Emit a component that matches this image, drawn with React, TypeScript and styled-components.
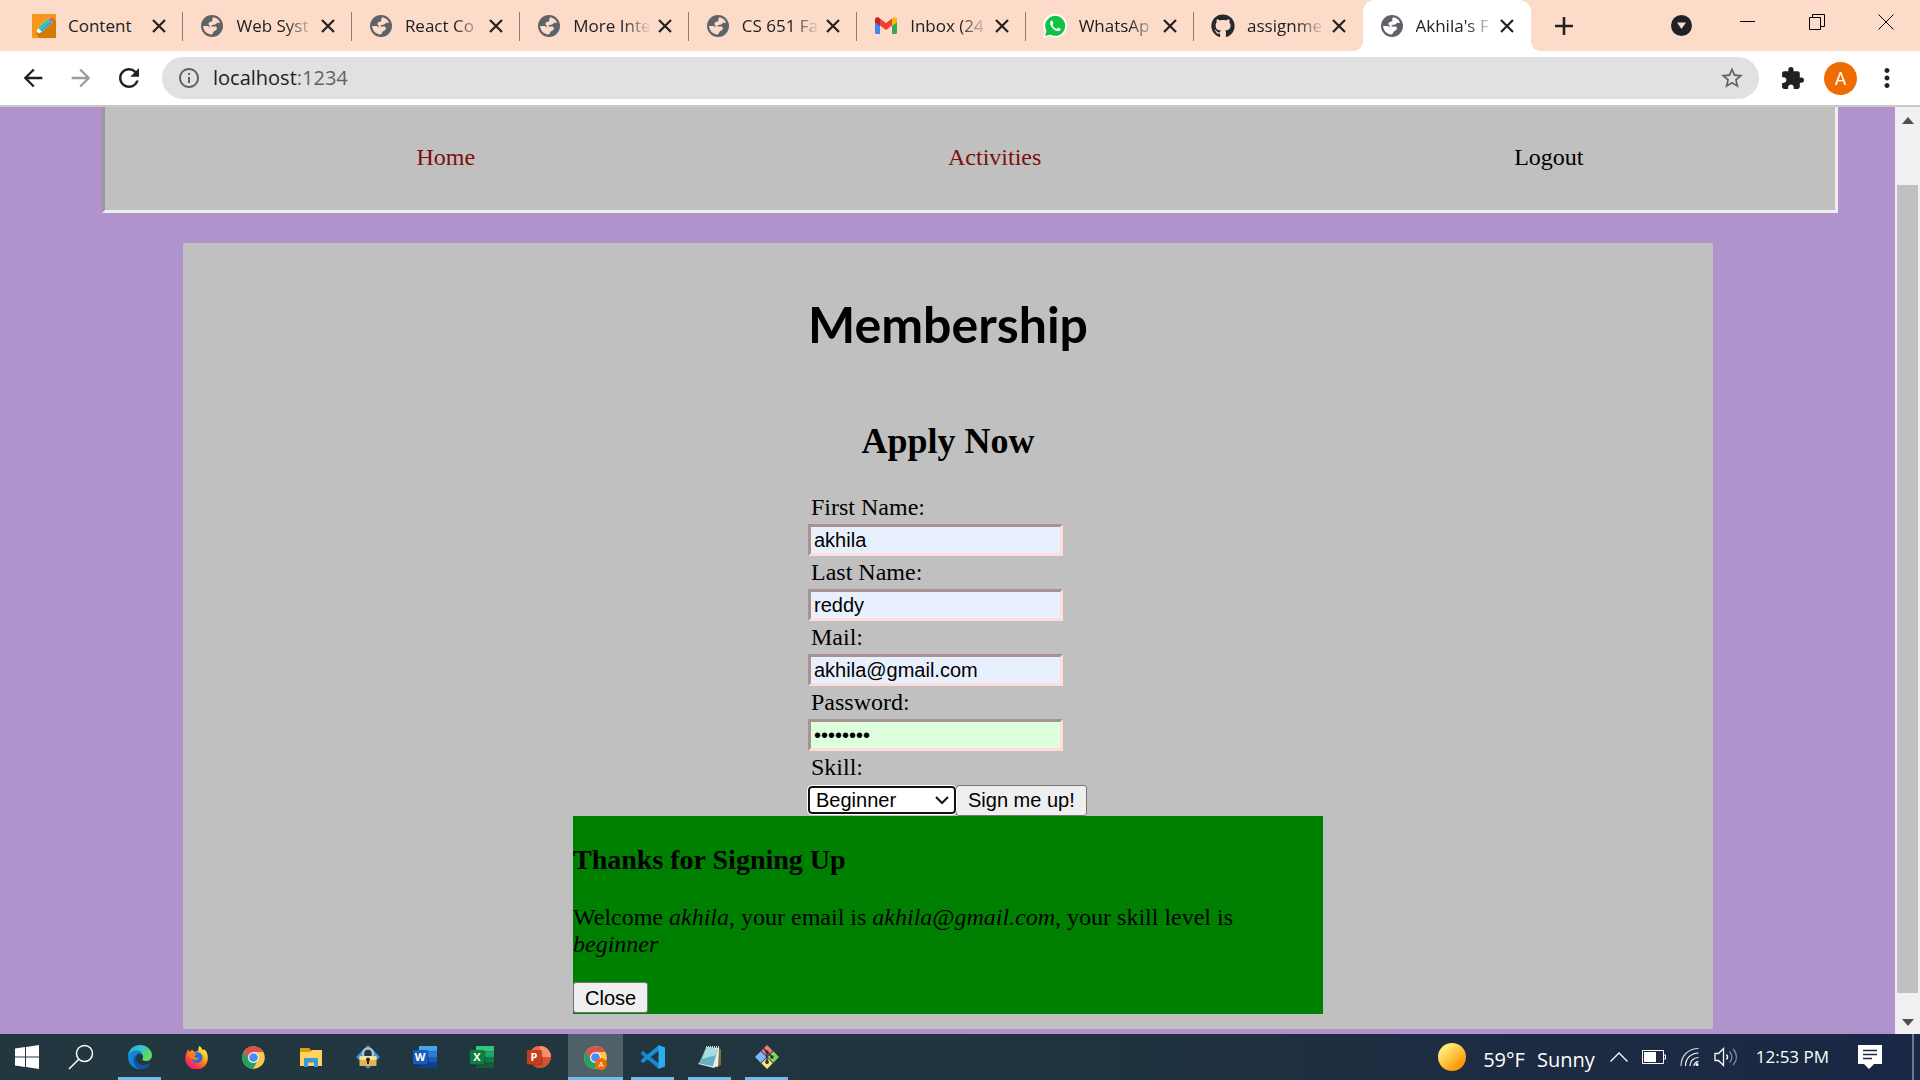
import React, { useState } from "react";
import styled, { createGlobalStyle, css } from "styled-components";
import {
  MdArrowBack,
  MdArrowForward,
  MdExtension,
  MdInfoOutline,
  MdMoreVert,
  MdRefresh,
  MdStarBorder,
} from "react-icons/md";
import { FaGithub } from "react-icons/fa";

const ui = `"Segoe UI", "Open Sans", "Noto Sans", sans-serif`;
const serif = `"Times New Roman", "Liberation Serif", serif`;
const arial = `Arial, "Liberation Sans", sans-serif`;

const GlobalStyle = createGlobalStyle`
  *, *::before, *::after { box-sizing: border-box; }
  body { margin: 0; background: #b092cc; }
  button { font: inherit; color: inherit; cursor: pointer; }
  svg { display: block; flex: none; }
`;

const Screen = styled.div`
  display: flex;
  flex-direction: column;
  height: 100vh;
  overflow: hidden;
`;

/* ---------- browser chrome ---------- */

const TabStrip = styled.header`
  display: flex;
  flex: none;
  height: 51px;
  padding-left: 15px;
  background: #fddbc9;
  font-family: ${ui};
  font-size: 17px;
  color: #202124;
`;

const Tabs = styled.div`
  display: flex;
  flex: 0 1 1516px;
  min-width: 0;
`;

const Tab = styled.div<{ $active?: boolean; $divider?: boolean }>`
  position: relative;
  display: flex;
  flex: 1 1 0;
  min-width: 0;
  align-items: center;
  padding: 0 16px 0 17px;
  ${(p) =>
    p.$divider &&
    css`
      &::after {
        content: "";
        position: absolute;
        right: 0;
        top: 12px;
        width: 1px;
        height: 29px;
        background: #8f7c72;
      }
    `}
  ${(p) =>
    p.$active &&
    css`
      background: #fff;
      border-radius: 12px 12px 0 0;
      &::before,
      &::after {
        content: "";
        position: absolute;
        bottom: 0;
        width: 10px;
        height: 10px;
      }
      &::before {
        right: 100%;
        background: radial-gradient(circle at 0 0, transparent 10px, #fff 10px);
      }
      &::after {
        left: 100%;
        background: radial-gradient(circle at 100% 0, transparent 10px, #fff 10px);
      }
    `}
`;

const TabTitle = styled.span`
  flex: 1;
  min-width: 0;
  margin: 0 6px 0 12px;
  overflow: hidden;
  white-space: nowrap;
  line-height: 24px;
  mask-image: linear-gradient(to right, #000 50px, transparent 78px);
`;

const PlainTitle = styled(TabTitle)`
  mask-image: none;
`;

const IconButton = styled.button<{ $width: number; $dim?: boolean }>`
  display: flex;
  flex: none;
  align-items: center;
  justify-content: center;
  width: ${(p) => p.$width}px;
  padding: 0;
  border: 0;
  background: none;
  color: ${(p) => (p.$dim ? "#9b9c9e" : "#202124")};
`;

const WindowButtons = styled.div`
  display: flex;
  margin-left: auto;
  height: 43px;
`;

const TabSearch = styled(IconButton)`
  height: 51px;
`;

const Toolbar = styled.div`
  display: flex;
  flex: none;
  align-items: center;
  height: 56px;
  padding: 0 12px 0 9px;
  border-bottom: 2px solid #c8c8c8;
  background: #fff;
  font-family: ${ui};
`;

const AddressBar = styled.div`
  display: flex;
  flex: 1;
  align-items: center;
  height: 42px;
  margin: 0 12px 0 9px;
  padding: 0 14px 0 15px;
  border-radius: 21px;
  background: #e1e1e1;
  color: #5f6368;
`;

const Address = styled.a`
  flex: 1;
  margin-left: 12px;
  font-size: 20px;
  line-height: 26px;
  color: #5f6368;
  text-decoration: none;
  b {
    font-weight: 400;
    color: #202124;
  }
`;

const Avatar = styled.button`
  flex: none;
  width: 33px;
  height: 33px;
  margin: 0 9px 0 10px;
  padding: 0;
  border: 0;
  border-radius: 50%;
  background: #ef6c00;
  color: #fff;
  font-family: Roboto, sans-serif;
  font-size: 18px;
`;

/* ---------- page ---------- */

const Viewport = styled.div`
  display: flex;
  flex: 1;
  min-height: 0;
  background: #b092cc;
`;

const Page = styled.div`
  flex: 1;
  min-width: 0;
  overflow: hidden;
  font-family: ${serif};
  font-size: 24px;
  line-height: 27px;
  color: #000;
`;

const Nav = styled.nav`
  display: flex;
  justify-content: space-around;
  margin: 0 57px 0 102px;
  padding: 37px 15px 39px 75px;
  border: 3px solid #eee;
  border-top: 0;
  border-left-color: #9a9a9a;
  background: #c0c0c0;
`;

const NavLink = styled.a<{ $plain?: boolean }>`
  color: ${(p) => (p.$plain ? "#000" : "#7b0f0f")};
  text-decoration: none;
`;

const Main = styled.main`
  display: flex;
  flex-direction: column;
  align-items: center;
  margin: 30px 182px 0 183px;
  padding: 48px 0 15px;
  background: #c0c0c0;
`;

const Title = styled.h1`
  margin: 0 0 63px;
  font-family: "Comic Sans MS", Lato, sans-serif;
  font-size: 50px;
  font-weight: 700;
  line-height: 67px;
`;

const Subtitle = styled.h2`
  margin: 0 0 29px;
  font-size: 36px;
  line-height: 41px;
`;

const Form = styled.form`
  display: flex;
  flex-direction: column;
  align-items: flex-start;
  width: 280px;
`;

const Label = styled.label`
  padding-left: 3px;
  line-height: 33px;
`;

const Field = styled.input<{ $fresh?: boolean }>`
  width: 255px;
  height: 32px;
  padding: 1px 3px;
  border: 3px solid;
  border-color: #a89292 #ffdddd #ffdddd #a89292;
  border-radius: 0;
  outline: 0;
  background: ${(p) => (p.$fresh ? "#ddffdd" : "#e8f0fe")};
  color: #000;
  font-family: ${arial};
  font-size: 20px;
`;

const Controls = styled.div`
  display: flex;
  align-items: center;
  height: 32px;
`;

const SelectBox = styled.div`
  position: relative;
  svg {
    position: absolute;
    right: 7px;
    top: 10px;
    pointer-events: none;
  }
`;

const Select = styled.select`
  display: block;
  width: 148px;
  height: 28px;
  padding: 0 6px;
  appearance: none;
  border: 2px solid #101010;
  border-radius: 4px;
  outline: 1px solid #fff;
  background: #fff;
  color: #000;
  font-family: ${arial};
  font-size: 20px;
  line-height: 24px;
`;

const Button = styled.button`
  height: 31px;
  padding: 0 11px;
  border: 1px solid #767676;
  border-radius: 3px;
  background: #efefef;
  color: #000;
  font-family: ${arial};
  font-size: 20px;
  line-height: 24px;
  white-space: nowrap;
`;

const Notice = styled.section`
  width: 750px;
  max-width: 100%;
  padding: 28px 0 1px;
  background: #008000;
  h3 {
    margin: 0 0 28px;
    font-size: 28px;
    line-height: 32px;
  }
  p {
    margin: 0 0 24px;
  }
  button {
    display: block;
  }
`;

const Scrollbar = styled.div`
  display: flex;
  flex: none;
  flex-direction: column;
  align-items: center;
  width: 25px;
  padding: 10px 0 8px;
  background: #f0f0f0;
`;

const Thumb = styled.div`
  flex: 1;
  width: 21px;
  margin: 61px 0 26px;
  background: #c0c0c0;
`;

/* ---------- taskbar ---------- */

const Taskbar = styled.footer`
  display: flex;
  flex: none;
  height: 46px;
  background: linear-gradient(to right, #22373f, #20353f 50%, #1d2b42 80%, #1a2745);
  color: #fff;
  font-family: ${ui};
`;

const Apps = styled.div`
  display: flex;
  gap: 2px;
  margin-left: 4px;
`;

const TaskButton = styled.button<{ $running?: boolean; $current?: boolean }>`
  position: relative;
  display: flex;
  flex: none;
  align-items: center;
  justify-content: center;
  width: 55px;
  padding: 0;
  border: 0;
  background: ${(p) => (p.$current ? "#4e6168" : "transparent")};
  ${(p) =>
    p.$running &&
    css`
      &::after {
        content: "";
        position: absolute;
        bottom: 0;
        left: ${p.$current ? 0 : 6}px;
        right: ${p.$current ? 0 : 6}px;
        height: 3px;
        background: #76b9ed;
      }
    `}
`;

const SystemButton = styled(TaskButton)`
  width: 54px;
`;

const Tray = styled.div`
  display: flex;
  align-items: center;
  margin-left: auto;
`;

const Weather = styled.div`
  display: flex;
  align-items: center;
  gap: 12px;
  margin: 0 15px 0 17px;
  padding-top: 5px;
  font-size: 20px;
  line-height: 26px;
`;

const TrayIcons = styled.div`
  display: flex;
  align-items: center;
  gap: 14px;
`;

const Clock = styled.time`
  margin: 0 29px 0 18px;
  font-size: 17px;
  line-height: 24px;
`;

const PeekEdge = styled.div`
  align-self: stretch;
  width: 8px;
  margin-left: 30px;
  border-left: 2px solid #6f788b;
`;

/* ---------- drawings ---------- */

const Globe = ({ land = "#fddbc9" }: { land?: string }) => (
  <svg width="24" height="24" viewBox="0 0 24 24">
    <circle cx="12" cy="12" r="11" fill="#5f6368" />
    <path
      d="M13.500 3.300c3 .6 5.400 2.600 6.600 5.300-1 .5-2.300.3-3-.2-.8 1.800-2.300 2.400-3.900 2.400-1.300 0-1.900.7-1.700 1.700h3.800c1.600 0 2.100 2.400.9 3.600-.8.8-2.600.9-2.900 2.100-.2.900-1 2.300-2 2.400C6.500 20 3.300 16.400 3.100 12h4.200c1.400 0 2.300.9 2.500 1.900.1-1.100.1-2.400-.9-3.100-.9-.7-.4-2.600.9-2.900 1.200-.3 2.500 0 2.600-1.300.1-1.200-.6-2.600 1.100-3.300z"
      fill={land}
    />
  </svg>
);

const Cross = () => (
  <svg width="14" height="14" viewBox="0 0 14 14" stroke="#202124" strokeWidth="2.200">
    <path d="M1 1l12 12M13 1L1 13" />
  </svg>
);

const Plus = () => (
  <svg width="18" height="18" viewBox="0 0 18 18" stroke="#202124" strokeWidth="2.600">
    <path d="M9 0v18M0 9h18" />
  </svg>
);

const Pencil = () => (
  <svg width="24" height="24" viewBox="0 0 24 24">
    <rect width="24" height="24" fill="#f7981d" />
    <path d="M20 3l4 4v17H7l-3-4z" fill="#d17c00" />
    <path d="M4 20l2-6L17 4l4 4L10 18z" fill="#fff" />
    <path d="M6 14L16 5l2 2L8 16z" fill="#20c9b6" />
    <path d="M8 16L18 7l2 2-10 9z" fill="#3aa6c0" />
    <path d="M16 5l2-1 3 3-1 2z" fill="#b65fc0" />
    <path d="M4 20l1-2 1 1z" fill="#333" />
  </svg>
);

const Gmail = () => (
  <svg width="24" height="17" viewBox="-1 0 24 17">
    <path d="M0 3v12.500a1.500 1.500 0 0 0 1.500 1.500H5V7z" fill="#4285f4" />
    <path d="M22 3v12.500a1.500 1.500 0 0 1-1.500 1.500H17V7z" fill="#34a853" />
    <path d="M5 1.500v7l6 4.500 6-4.500v-7L11 6z" fill="#ea4335" />
    <path d="M0 3v2.200L5 9V1.500C2.500-.5 0 0 0 3z" fill="#c5221f" />
    <path d="M22 3v2.200L17 9V1.500C19.500-.5 22 0 22 3z" fill="#fbbc04" />
  </svg>
);

const WhatsApp = () => (
  <svg width="24" height="24" viewBox="0 0 24 24">
    <path d="M0 24l1.700-6.200A12 12 0 1 1 6.300 22.300z" fill="#fff" />
    <path d="M2 22l1.500-5.200A10 10 0 1 1 7.200 20.500z" fill="#12c143" />
    <path
      d="M8.500 6.500c-1.600.8-1.800 2.600-1 4.400 1.300 2.900 3.700 5.200 6.600 6.200 1.700.5 3.300-.2 3.700-2l-2.700-1.500-1.400 1.400c-2-.8-3.500-2.200-4.300-4l1-1.300L9.300 6.500z"
      fill="#fff"
    />
  </svg>
);

const Arrow = ({ down }: { down?: boolean }) => (
  <svg width="12" height="7" viewBox="0 0 12 7">
    <path d={down ? "M0 0h12L6 7z" : "M0 7h12L6 0z"} fill="#505050" />
  </svg>
);

const Windows = () => (
  <svg width="24" height="24" viewBox="0 0 24 24" fill="#fff">
    <path d="M0 3.400l10-1.400v9.500H0zM11 1.900L24 0v11.500H11zM0 12.500h10V22L0 20.600zM11 12.500h13V24l-13-1.900z" />
  </svg>
);

const Search = () => (
  <svg width="26" height="26" viewBox="0 0 26 26" fill="none" stroke="#fff" strokeWidth="1.500">
    <circle cx="16.500" cy="9.500" r="8" />
    <path d="M10.800 15.200L1 25" />
  </svg>
);

const Edge = () => (
  <svg width="24" height="24" viewBox="0 0 24 24">
    <defs>
      <linearGradient id="edgeTop" x1="0" y1="0" x2="1" y2="0.500">
        <stop offset="0" stopColor="#2aa9e8" />
        <stop offset="0.500" stopColor="#2fc3cf" />
        <stop offset="1" stopColor="#66dd4e" />
      </linearGradient>
    </defs>
    <path d="M0 12C0 5 5 0 12 0s12 5 12 10c0 4-3 6-6 6-3 0-4-1-3.500-2 1.500-2.500 0-6-4.500-6C5 8 1 11 0 12z" fill="url(#edgeTop)" />
    <path d="M0 12c.5-4 4-6.500 8.500-6.500 4 0 6.700 2.500 6.700 5.300 0-1.800-1.600-2.800-3.600-2.800C9 8.500 8 11 8 13.500c0 4 2.500 8 7.500 10C8 26 0 20.500 0 12z" fill="#1583d8" />
    <path d="M9.500 9C8 11 7.600 14 9 16.500c2 3.500 7 4.500 11 2.500 1.500-.7 2.500-.5 1.800.7-2 3-6 4.800-10.300 4.200C7 22 5 18.500 5.500 14.500 6 11.500 7.700 9.800 9.500 9z" fill="#0f559f" />
  </svg>
);

const Firefox = () => (
  <svg width="23" height="23" viewBox="0 0 23 23">
    <defs>
      <linearGradient id="fox" x1="0.900" y1="0" x2="0.200" y2="1">
        <stop offset="0.100" stopColor="#fff44f" />
        <stop offset="0.450" stopColor="#ff980e" />
        <stop offset="0.750" stopColor="#ff3647" />
        <stop offset="1" stopColor="#e31587" />
      </linearGradient>
    </defs>
    <path d="M1.500 7L3 3.500 5 6l2-2.500L9 6l4-1 1-5c2 1 3 2.500 3.500 4l2-.5C22 6 23 9 22.800 12.500A11.300 11.300 0 1 1 1.500 7z" fill="url(#fox)" />
    <circle cx="12" cy="11.500" r="5.500" fill="#1f6fe5" />
    <path d="M4 7c2-1 4-1 5 .3l2.500.2c.3 1.200-2 1.600-2 2.700.4 1.800 2.500 2 4.500 1.300-.6 2.500-4 3.600-6 2C5.500 12.500 4 10 4 7z" fill="#ff7a1a" />
  </svg>
);

const Chrome = ({ badge }: { badge?: boolean }) => (
  <svg width="23" height="23" viewBox="0 0 23 23" overflow="visible">
    <circle cx="11.500" cy="11.500" r="11.300" fill="#fcc84c" />
    <path d="M1.700 5.800A11.300 11.300 0 0 1 21.300 6H11.500l-5 8.500z" fill="#d9534a" />
    <path d="M1.700 5.800A11.300 11.300 0 0 0 11 22.800l5-8.500-9 .5z" fill="#1da261" />
    <circle cx="11.500" cy="11.500" r="5.500" fill="#e9eef6" />
    <circle cx="11.500" cy="11.500" r="4.300" fill="#4c8bf5" />
    {badge && (
      <>
        <circle cx="17" cy="18" r="6" fill="#ef6c00" />
        <text x="17" y="21" textAnchor="middle" fontFamily="Roboto, sans-serif" fontSize="8" fill="#fff">
          A
        </text>
      </>
    )}
  </svg>
);

const Explorer = () => (
  <svg width="22" height="19" viewBox="0 0 22 19">
    <path d="M0 0h9l2 2v3H0z" fill="#e09c0a" />
    <path d="M0 4h10l2-2h10v16H0z" fill="#ffd35e" />
    <path d="M4 10h14v9h-4v-4.500H8V19H4z" fill="#3a96dd" />
  </svg>
);

const Padlock = () => (
  <svg width="24" height="24" viewBox="0 0 24 24">
    <path d="M12 0l12 12-12 12L0 12z" fill="#2f9be6" />
    <path d="M7 12V8.500a5 5 0 0 1 10 0V12" fill="#23373f" stroke="#b4bdc0" strokeWidth="2.600" />
    <rect x="3.500" y="11" width="17" height="10" rx="1" fill="#e3b552" />
    <rect x="3.500" y="11" width="17" height="4" rx="1" fill="#f8e09a" />
    <path d="M12 12.500a2 2 0 0 1 1 3.700V19h-2v-2.800a2 2 0 0 1 1-3.700z" fill="#222" />
  </svg>
);

type OfficeProps = { letter: string; shades: string[]; tile: string; round?: boolean };

const Office = ({ letter, shades, tile, round }: OfficeProps) => (
  <svg width="24" height="22" viewBox="0 0 24 22">
    {round ? (
      <>
        <circle cx="13" cy="11" r="11" fill={shades[2]} />
        <path d="M13 0a11 11 0 0 1 11 11H13z" fill={shades[1]} />
        <path d="M13 0A11 11 0 0 0 2 11h11z" fill={shades[0]} />
      </>
    ) : (
      shades.map((c, i) => <rect key={c} x="6" y={i * 5.5} width="18" height="5.500" fill={c} />)
    )}
    <rect x="1" y="5" width="14.500" height="14.500" fill="#000" opacity="0.250" />
    <rect x="0" y="4" width="14.500" height="14.500" rx="1" fill={tile} />
    <text x="7" y="15" textAnchor="middle" fontFamily="Open Sans, sans-serif" fontWeight="700" fontSize="11" fill="#fff">
      {letter}
    </text>
  </svg>
);

const Code = () => (
  <svg width="24" height="24" viewBox="0 0 24 24">
    <path d="M0 7.500l2-1.500 16 12.500V24L0 9z" fill="#1a86cf" />
    <path d="M0 16.500L2 18 18 5.500V0L0 15z" fill="#1591dc" />
    <path d="M17.500 0L24 2.500v19L17.500 24z" fill="#2cabf2" />
  </svg>
);

const Notepad = () => (
  <svg width="24" height="22" viewBox="0 0 24 22">
    <path d="M20 2l3 1v16l-4 2z" fill="#8a6a35" />
    <path d="M8 1l13 1-1 19-5-1z" fill="#e8f0f2" />
    <path d="M8 2l12 1-5 17L1 17z" fill="#62b3c2" />
    <path d="M8 2l12 1-2 6L4 13z" fill="#a9dbe2" />
    <path d="M1 17l14 3 5-1-4 3L0 18z" fill="#d8e2e6" />
    <path d="M8 1h13" stroke="#d0d7da" strokeWidth="2" strokeDasharray="1 1" />
  </svg>
);

const Git = () => (
  <svg width="24" height="24" viewBox="0 0 24 24">
    <path d="M12 0l5.700 5.700L12 11.400 6.300 5.700z" fill="#f2777a" />
    <path d="M5.700 6.300l5.700 5.700-5.700 5.700L0 12z" fill="#80b3ff" />
    <path d="M18.300 6.300L24 12l-5.700 5.700-5.700-5.700z" fill="#87d45c" />
    <path d="M12 12.600l5.700 5.700L12 24l-5.700-5.700z" fill="#ffe17a" />
    <path d="M8.500 3.500L12 7v10M12 7l5 5" fill="none" stroke="#23303a" strokeWidth="1.400" />
    <g fill="#23303a">
      <circle cx="12" cy="7" r="1.700" />
      <circle cx="17" cy="12" r="1.700" />
      <circle cx="12" cy="17" r="1.900" />
    </g>
  </svg>
);

const Sun = () => (
  <svg width="28" height="28" viewBox="0 0 28 28">
    <defs>
      <linearGradient id="sun" x1="0.150" y1="0.100" x2="0.800" y2="0.900">
        <stop offset="0.150" stopColor="#ffe873" />
        <stop offset="0.900" stopColor="#ff9a05" />
      </linearGradient>
    </defs>
    <circle cx="14" cy="14" r="14" fill="url(#sun)" />
  </svg>
);

const TrayGlyphs = () => (
  <TrayIcons>
    <svg width="18" height="10" viewBox="0 0 18 10" fill="none" stroke="#fff" strokeWidth="1.300">
      <path d="M.5 9.500L9 1l8.500 8.500" />
    </svg>
    <svg width="24" height="14" viewBox="0 0 24 14">
      <path d="M.5.500h21v13H.5zM22 5h1.500v4H22" fill="none" stroke="#fff" />
      <rect x="2" y="2" width="12" height="10" fill="#fff" />
    </svg>
    <svg width="20" height="20" viewBox="0 0 20 20" fill="none" stroke="#fff" strokeWidth="1.200">
      <path d="M1 19C1 9 8 1.500 18.500 1.500" opacity="0.800" />
      <path d="M5.500 19C5.500 11.500 11 6 18.500 6M10 19c0-5 3.500-8.500 8.500-8.500M14 19c0-2.500 1.800-4.300 4.500-4.300" />
      <circle cx="17" cy="17.500" r="1.500" fill="#fff" stroke="none" />
    </svg>
    <svg width="24" height="20" viewBox="0 0 24 20" fill="none" stroke="#fff" strokeWidth="1.300">
      <path d="M1 6.500h3.500L9.500 1.500v17l-5-5H1z" />
      <path d="M12.500 7.500c1.300 1.500 1.300 3.500 0 5" />
      <path d="M15.500 4.500c3 3.500 3 7.500 0 11M19 2c4.500 5 4.500 11 0 16" opacity="0.450" />
    </svg>
  </TrayIcons>
);

const Message = () => (
  <svg width="24" height="24" viewBox="0 0 24 24">
    <path d="M0 0h24v19H16l-5 5-5-5H0z" fill="#fff" />
    <path d="M5 5.500h14M5 9.500h14M5 13.500h9" stroke="#1b2843" strokeWidth="1.300" />
  </svg>
);

/* ---------- composition ---------- */

const tabs: { title: string; icon: React.ReactNode; plain?: boolean }[] = [
  { title: "Content", icon: <Pencil />, plain: true },
  { title: "Web Syst", icon: <Globe /> },
  { title: "React Co", icon: <Globe /> },
  { title: "More Inte", icon: <Globe /> },
  { title: "CS 651 Fa", icon: <Globe /> },
  { title: "Inbox (24", icon: <Gmail /> },
  { title: "WhatsAp", icon: <WhatsApp /> },
  { title: "assignme", icon: <FaGithub size={24} color="#24292e" /> },
  { title: "Akhila's F", icon: <Globe land="#fff" /> },
];

const systemButtons = [
  { name: "Start", icon: <Windows /> },
  { name: "Search", icon: <Search /> },
];

const apps: { name: string; icon: React.ReactNode; running?: boolean; current?: boolean }[] = [
  { name: "Edge", icon: <Edge />, running: true },
  { name: "Firefox", icon: <Firefox /> },
  { name: "Chrome", icon: <Chrome /> },
  { name: "File Explorer", icon: <Explorer /> },
  { name: "Secure Browser", icon: <Padlock /> },
  { name: "Word", icon: <Office letter="W" tile="#185abd" shades={["#41a5ee", "#2b7cd3", "#185abe", "#103f91"]} /> },
  { name: "Excel", icon: <Office letter="X" tile="#107c41" shades={["#33c481", "#21a366", "#107c42", "#185c37"]} /> },
  { name: "PowerPoint", icon: <Office round letter="P" tile="#c43e1c" shades={["#ed6c47", "#ff8f6b", "#d35230"]} /> },
  { name: "Chrome profile", icon: <Chrome badge />, running: true, current: true },
  { name: "Visual Studio Code", icon: <Code />, running: true },
  { name: "Notepad", icon: <Notepad />, running: true },
  { name: "Git", icon: <Git />, running: true },
];

const fields = [
  { id: "first", label: "First Name:", type: "text", value: "akhila" },
  { id: "last", label: "Last Name:", type: "text", value: "reddy" },
  { id: "mail", label: "Mail:", type: "email", value: "akhila@gmail.com" },
  { id: "password", label: "Password:", type: "password", value: "password" },
];

function BrowserChrome() {
  return (
    <>
      <TabStrip>
        <Tabs>
          {tabs.map((t, i) => {
            const Name = t.plain ? PlainTitle : TabTitle;
            return (
              <Tab key={t.title} $active={i === tabs.length - 1} $divider={i < tabs.length - 2}>
                {t.icon}
                <Name>{t.title}</Name>
                <IconButton $width={16} aria-label="Close tab">
                  <Cross />
                </IconButton>
              </Tab>
            );
          })}
        </Tabs>
        <IconButton $width={66} aria-label="New tab">
          <Plus />
        </IconButton>
        <WindowButtons>
          <TabSearch $width={64} aria-label="Search tabs">
            <svg width="21" height="21" viewBox="0 0 21 21">
              <circle cx="10.500" cy="10.500" r="10.500" fill="#202124" />
              <path d="M6 7.500h9L10.500 14z" fill="#fddbc9" />
            </svg>
          </TabSearch>
          <IconButton $width={69} aria-label="Minimize">
            <svg width="15" height="15" viewBox="0 0 15 15" stroke="#000">
              <path d="M0 7.500h15" />
            </svg>
          </IconButton>
          <IconButton $width={69} aria-label="Restore">
            <svg width="16" height="16" viewBox="0 0 16 16" fill="none" stroke="#000">
              <path d="M.5 3.500h11v12H.5zM3.500 3.500v-3h12v12h-4" />
            </svg>
          </IconButton>
          <IconButton $width={69} aria-label="Close window">
            <svg width="16" height="16" viewBox="0 0 16 16" stroke="#000">
              <path d="M.5.500l15 15M15.500.500l-15 15" />
            </svg>
          </IconButton>
        </WindowButtons>
      </TabStrip>
      <Toolbar>
        <IconButton $width={48} aria-label="Back">
          <MdArrowBack size={28} />
        </IconButton>
        <IconButton $width={48} $dim aria-label="Forward">
          <MdArrowForward size={28} />
        </IconButton>
        <IconButton $width={48} aria-label="Reload">
          <MdRefresh size={30} />
        </IconButton>
        <AddressBar>
          <MdInfoOutline size={24} />
          <Address href="#">
            <b>localhost</b>:1234
          </Address>
          <MdStarBorder size={26} />
        </AddressBar>
        <IconButton $width={43} aria-label="Extensions">
          <MdExtension size={25} />
        </IconButton>
        <Avatar>A</Avatar>
        <IconButton $width={42} aria-label="Menu">
          <MdMoreVert size={30} />
        </IconButton>
      </Toolbar>
    </>
  );
}

function Membership() {
  const [skill, setSkill] = useState("beginner");
  return (
    <Main>
      <Title>Membership</Title>
      <Subtitle>Apply Now</Subtitle>
      <Form onSubmit={(e) => e.preventDefault()}>
        {fields.map((f) => (
          <React.Fragment key={f.id}>
            <Label htmlFor={f.id}>{f.label}</Label>
            <Field id={f.id} type={f.type} defaultValue={f.value} $fresh={f.type === "password"} />
          </React.Fragment>
        ))}
        <Label htmlFor="skill">Skill:</Label>
        <Controls>
          <SelectBox>
            <Select id="skill" value={skill} onChange={(e) => setSkill(e.target.value)}>
              <option value="beginner">Beginner</option>
              <option value="intermediate">Intermediate</option>
              <option value="advanced">Advanced</option>
            </Select>
            <svg width="14" height="9" viewBox="0 0 14 9" fill="none" stroke="#101010" strokeWidth="2">
              <path d="M1 1l6 6 6-6" />
            </svg>
          </SelectBox>
          <Button type="submit">Sign me up!</Button>
        </Controls>
      </Form>
      <Notice>
        <h3>Thanks for Signing Up</h3>
        <p>
          Welcome <i>akhila</i>, your email is <i>akhila@gmail.com</i>, your skill level is <i>{skill}</i>
        </p>
        <Button type="button">Close</Button>
      </Notice>
    </Main>
  );
}

export default function App() {
  return (
    <Screen>
      <GlobalStyle />
      <BrowserChrome />
      <Viewport>
        <Page>
          <Nav>
            <NavLink href="#home">Home</NavLink>
            <NavLink href="#activities">Activities</NavLink>
            <NavLink href="#logout" $plain>
              Logout
            </NavLink>
          </Nav>
          <Membership />
        </Page>
        <Scrollbar>
          <Arrow />
          <Thumb />
          <Arrow down />
        </Scrollbar>
      </Viewport>
      <Taskbar>
        {systemButtons.map((b) => (
          <SystemButton key={b.name} aria-label={b.name}>
            {b.icon}
          </SystemButton>
        ))}
        <Apps>
          {apps.map((a) => (
            <TaskButton key={a.name} aria-label={a.name} $running={a.running} $current={a.current}>
              {a.icon}
            </TaskButton>
          ))}
        </Apps>
        <Tray>
          <Sun />
          <Weather>
            <span>59°F</span>
            <span>Sunny</span>
          </Weather>
          <TrayGlyphs />
          <Clock>12:53 PM</Clock>
          <Message />
          <PeekEdge />
        </Tray>
      </Taskbar>
    </Screen>
  );
}
